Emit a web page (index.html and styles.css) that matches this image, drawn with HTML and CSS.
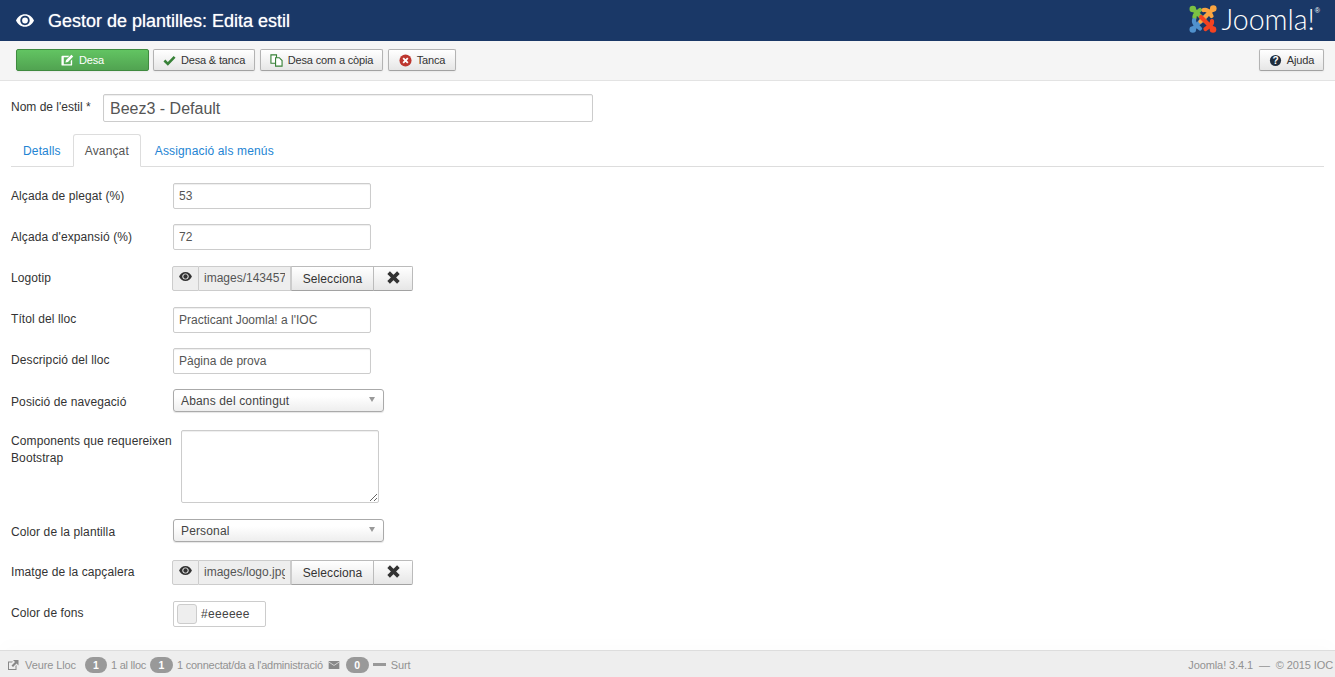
FILE: index.html
```html
<!DOCTYPE html>
<html lang="ca">
<head>
<meta charset="utf-8">
<title>Gestor de plantilles: Edita estil</title>
<link rel="stylesheet" href="styles.css">
</head>
<body>
<header class="topbar">
  <svg class="topbar-eye" viewBox="0 0 20 14"><path fill="#fff" d="M10 0C5.4 0 1.800 3 0 7c1.800 4 5.400 7 10 7s8.200-3 10-7c-1.800-4-5.400-7-10-7zm0 12.200C7 12.200 4.800 9.900 4.800 7S7 1.800 10 1.800 15.200 4.100 15.200 7 13 12.200 10 12.200z"/><circle fill="#fff" cx="10" cy="7" r="3.200"/></svg>
  <h1 class="topbar-title">Gestor de plantilles: Edita estil</h1>
  <div class="brand">
    <svg class="brand-mark" viewBox="0 0 28 28">
      <g fill="none" stroke-width="4.200" stroke-linecap="round">
        <path stroke="#7ac143" d="M5.500 13 Q5 10 8 7.500 L11 5 M4 4 L16 16"/>
        <path stroke="#5091cd" d="M5 15 Q4.500 18 8 21 L11 23.500 M4 24 L17 11"/>
        <path stroke="#f9a541" d="M14.500 5 Q18 4 20.500 7.500 L22.500 11 M24 4 L11.500 16.500"/>
        <path stroke="#f44321" d="M23 16 Q23.500 19 20 21.500 L16.500 24 M24 24 L12 12"/>
      </g>
      <circle fill="#7ac143" cx="3.800" cy="4" r="3.300"/>
      <circle fill="#f9a541" cx="24.300" cy="3.600" r="3.300"/>
      <circle fill="#f44321" cx="24" cy="24.500" r="3.300"/>
      <circle fill="#5091cd" cx="3.800" cy="24.500" r="3.300"/>
    </svg>
    <span class="brand-name">Joomla!</span><span class="brand-reg">®</span>
  </div>
</header>

<nav class="toolbar">
  <button class="btn btn-save" type="button">
    <svg class="ico" viewBox="0 0 14 14"><path fill="#fff" d="M1.500 2H9L7.500 3.500H3v7.500h7.500V7.500L12 6v5.500a1 1 0 0 1-1 1H1.500a1 1 0 0 1-1-1V3a1 1 0 0 1 1-1z"/><path fill="#fff" d="M11.200.8l2 2L7.500 8.500l-2.700.7.700-2.700z"/></svg>
    Desa
  </button>
  <button class="btn btn-close" type="button">
    <svg class="ico" viewBox="0 0 14 14"><path fill="none" stroke="#378137" stroke-width="2.800" d="M1.500 7l3.700 3.700L12.500 3"/></svg>
    Desa &amp; tanca
  </button>
  <button class="btn btn-copy" type="button">
    <svg class="ico" viewBox="0 0 14 14"><path fill="#fff" stroke="#378137" stroke-width="1.200" d="M1 1h6v9H1z"/><path fill="#fff" stroke="#378137" stroke-width="1.200" d="M6 4h4l3 3v6H6z"/></svg>
    Desa com a còpia
  </button>
  <button class="btn btn-cancel" type="button">
    <svg class="ico" viewBox="0 0 14 14"><circle fill="#bd362f" cx="7" cy="7" r="6.500"/><path stroke="#fff" stroke-width="2" d="M4.500 4.500l5 5m0-5l-5 5"/></svg>
    Tanca
  </button>
  <button class="btn btn-help" type="button">
    <svg class="ico" viewBox="0 0 14 14"><circle fill="#1f2d3d" cx="7" cy="7" r="6"/><text x="7" y="10.500" class="ico-q">?</text></svg>
    Ajuda
  </button>
</nav>

<main class="content">
  <div class="name-row">
    <label class="name-label">Nom de l'estil *</label>
    <input class="name-input" type="text" value="Beez3 - Default">
  </div>

  <ul class="tabs">
    <li class="tab">Detalls</li>
    <li class="tab tab-active">Avançat</li>
    <li class="tab">Assignació als menús</li>
  </ul>

  <form class="fields">
    <div class="row row-text row-lead">
      <label class="lbl">Alçada de plegat (%)</label>
      <input class="txt" type="text" value="53">
    </div>
    <div class="row row-text row-lead">
      <label class="lbl">Alçada d'expansió (%)</label>
      <input class="txt" type="text" value="72">
    </div>
    <div class="row row-media">
      <label class="lbl">Logotip</label>
      <div class="media">
        <span class="media-eye"><svg class="eye-s" viewBox="0 0 20 14"><path fill="#333" d="M10 0C5.400 0 1.800 3 0 7c1.800 4 5.400 7 10 7s8.200-3 10-7c-1.800-4-5.400-7-10-7zm0 11.800C7.200 11.800 5 9.700 5 7s2.200-4.800 5-4.800S15 4.300 15 7s-2.200 4.800-5 4.800z"/><circle fill="#333" cx="10" cy="7" r="3.400"/></svg></span>
        <span class="media-path"><span class="media-clip">images/143457</span></span>
        <span class="media-btn">Selecciona</span>
        <span class="media-x"><svg class="x-s" viewBox="0 0 12 12"><path stroke="#333" stroke-width="3.400" d="M1.500 1.500l9 9m0-9l-9 9"/></svg></span>
      </div>
    </div>
    <div class="row row-text">
      <label class="lbl">Títol del lloc</label>
      <input class="txt" type="text" value="Practicant Joomla! a l'IOC">
    </div>
    <div class="row row-text">
      <label class="lbl">Descripció del lloc</label>
      <input class="txt" type="text" value="Pàgina de prova">
    </div>
    <div class="row row-select">
      <label class="lbl">Posició de navegació</label>
      <div class="select">Abans del contingut<span class="caret"></span></div>
    </div>
    <div class="row row-area">
      <label class="lbl lbl-area">Components que requereixen Bootstrap</label>
      <textarea class="area"></textarea>
    </div>
    <div class="row row-select row-before-media">
      <label class="lbl">Color de la plantilla</label>
      <div class="select">Personal<span class="caret"></span></div>
    </div>
    <div class="row row-media">
      <label class="lbl">Imatge de la capçalera</label>
      <div class="media">
        <span class="media-eye"><svg class="eye-s" viewBox="0 0 20 14"><path fill="#333" d="M10 0C5.400 0 1.800 3 0 7c1.800 4 5.400 7 10 7s8.200-3 10-7c-1.800-4-5.400-7-10-7zm0 11.800C7.200 11.800 5 9.700 5 7s2.200-4.800 5-4.800S15 4.300 15 7s-2.200 4.800-5 4.800z"/><circle fill="#333" cx="10" cy="7" r="3.400"/></svg></span>
        <span class="media-path media-path-short"><span class="media-clip">images/logo.jpg</span></span>
        <span class="media-btn">Selecciona</span>
        <span class="media-x"><svg class="x-s" viewBox="0 0 12 12"><path stroke="#333" stroke-width="3.400" d="M1.500 1.500l9 9m0-9l-9 9"/></svg></span>
      </div>
    </div>
    <div class="row row-color">
      <label class="lbl">Color de fons</label>
      <div class="color"><span class="swatch"></span>#eeeeee</div>
    </div>
  </form>
</main>

<footer class="status">
  <svg class="st-ico" viewBox="0 0 12 12"><path fill="#888" d="M1 2.500h5L5 3.500H2v6.500h6.500V7l1-1v5H1z"/><path fill="#888" d="M6 1h5.500v5.500L9.500 4.500 6 8 4.500 6.500 8 3z"/></svg>
  <span class="st-link">Veure Lloc</span>
  <span class="pill">1</span><span class="st-text">1 al lloc</span>
  <span class="pill">1</span><span class="st-text">1 connectat/da a l'administració</span>
  <svg class="st-mail" viewBox="0 0 12 9"><path fill="#888" d="M0 0h12v9H0z"/><path fill="none" stroke="#eee" stroke-width=".8" d="M0 1l6 4 6-4"/></svg>
  <span class="pill pill-zero">0</span>
  <span class="st-minus"></span>
  <span class="st-link">Surt</span>
  <span class="st-right">Joomla! 3.4.1 &nbsp;—&nbsp; © 2015 IOC</span>
</footer>
</body>
</html>
```

FILE: styles.css
```css
* { box-sizing: border-box; }
html, body { height: 100%; }
body {
  margin: 0;
  height: 677px;
  overflow: hidden;
  display: flex;
  flex-direction: column;
  background: #fff;
  color: #333;
  font: 12px/18px "Liberation Sans", Arial, sans-serif;
}

/* header */
.topbar {
  flex: none;
  height: 41px;
  background: #1a3867;
  display: flex;
  align-items: center;
  padding: 0 15px 0 16px;
}
.topbar-eye { width: 18px; height: 13px; margin-right: 14px; }
.topbar-title {
  margin: 0;
  font-size: 18px;
  font-weight: 400;
  color: #fff;
  text-shadow: 0 0 1px rgba(255,255,255,.7);
}
.brand { margin-left: auto; display: flex; align-items: center; color: #fff; height: 41px; }
.brand-mark { width: 28px; height: 28px; margin: -4px 4px 0 0; }
.brand-name { font: 300 28.500px/1 Lato, sans-serif; margin-top: -2px; }
.brand-reg { font-size: 7px; align-self: flex-start; line-height: 1; margin-top: 7px; }

/* toolbar */
.toolbar {
  flex: none;
  height: 40px;
  padding: 8px 11px 9px 16px;
  background: #f5f5f5;
  border-bottom: 1px solid #e3e3e3;
  display: flex;
  gap: 5px;
}
.btn {
  height: 22px;
  padding: 0;
  border: 1px solid #b3b3b3;
  border-bottom-color: #a2a2a2;
  border-radius: 2px;
  background: linear-gradient(#fff, #e6e6e6);
  box-shadow: 0 1px 2px rgba(0,0,0,.05);
  font: 11px/20px "Liberation Sans", Arial, sans-serif;
  letter-spacing: -.15px;
  color: #333;
  display: flex;
  align-items: center;
  justify-content: center;
  gap: 5px;
}
.ico { width: 13px; height: 13px; flex: none; }
.ico-q { font: bold 11px "Liberation Sans", sans-serif; fill: #fff; text-anchor: middle; }
.btn-save {
  width: 133px;
  margin-right: -1px;
  color: #fff;
  background: linear-gradient(#62c462, #51a351);
  border-color: #3f8a3f;
}
.btn-close { width: 102px; }
.btn-copy { width: 123px; }
.btn-cancel { width: 68px; }
.btn-help { width: 65px; margin-left: auto; }

/* content */
.content { flex: 1; padding: 13px 11px 0 11px; min-height: 0; }
.name-row { display: flex; align-items: center; height: 28px; }
.name-label { width: 92px; flex: none; margin-top: -3px; }
.name-input {
  width: 490px;
  height: 28px;
  padding: 2px 6px 0;
  border: 1px solid #ccc;
  border-radius: 2px;
  font: 16px "Liberation Sans", Arial, sans-serif;
  color: #555;
  box-shadow: inset 0 1px 1px rgba(0,0,0,.07);
}

.tabs {
  list-style: none;
  margin: 12px 0 16px;
  padding: 0;
  height: 33px;
  display: flex;
  border-bottom: 1px solid #ddd;
  color: #2384d3;
  letter-spacing: .15px;
}
.tab { padding: 8px 12px 0; height: 33px; }
.tab-active {
  color: #555;
  background: #fff;
  height: 33px;
  border: 1px solid #ddd;
  border-bottom-color: #fff;
  border-radius: 3px 3px 0 0;
  padding: 7px 11px 0;
  width: 68px;
  margin-right: 2px;
}

.fields { display: flex; flex-direction: column; }
.row { display: flex; align-items: flex-start; }
.row-text { height: 26px; margin-bottom: 15px; }
.row-media { height: 26px; margin: 1px 0 15px; }
.row-select { height: 23px; margin-bottom: 18px; }
.row-before-media { margin-bottom: 17px; }
.row-area { height: 73px; margin-bottom: 16px; }
.row-color { height: 26px; }
.lbl { width: 162px; flex: none; padding-top: 3px; color: #333; letter-spacing: .1px; }
.row-lead .lbl, .row-select .lbl { padding-top: 4px; }
.lbl-area { width: 176px; margin-right: -6px; padding-top: 3px; line-height: 17px; }

.txt {
  width: 198px;
  height: 26px;
  padding: 0 5px;
  border: 1px solid #ccc;
  border-radius: 2px;
  font: 12px "Liberation Sans", Arial, sans-serif;
  color: #555;
  box-shadow: inset 0 1px 1px rgba(0,0,0,.07);
}
.media {
  display: flex;
  height: 25px;
  width: 241px;
  margin-left: -1px;
  border-radius: 2px;
  font-size: 12px;
  line-height: 23px;
}
.media-eye {
  width: 27px;
  flex: none;
  border: 1px solid #ccc;
  background: #eee;
  border-radius: 2px 0 0 2px;
  display: flex;
  align-items: center;
  justify-content: center;
}
.eye-s { width: 13px; height: 9px; margin-top: -4px; }
.media-path {
  width: 92px;
  flex: none;
  padding-left: 5px;
  border: 1px solid #ccc;
  border-left: 0;
  background: #eee;
  color: #555;
}
.media-clip {
  display: block;
  width: 81px;
  overflow: hidden;
  white-space: nowrap;
}
.media-btn {
  width: 83px;
  flex: none;
  text-align: center;
  border: 1px solid #bbb;
  border-left-color: #ccc;
  border-bottom-color: #a2a2a2;
  background: linear-gradient(#fff, #e6e6e6);
  line-height: 24px;
  letter-spacing: .1px;
}
.media-x {
  width: 40px;
  flex: none;
  margin-left: -1px;
  border: 1px solid #bbb;
  border-bottom-color: #a2a2a2;
  border-radius: 0 2px 2px 0;
  background: linear-gradient(#fff, #e6e6e6);
  display: flex;
  align-items: center;
  justify-content: center;
}
.x-s { width: 13px; height: 13px; margin-top: -3px; }
.select {
  width: 211px;
  height: 23px;
  padding: 0 7px;
  line-height: 22px;
  border: 1px solid #aaa;
  border-radius: 3px;
  background: linear-gradient(#fff 30%, #eee);
  box-shadow: 0 1px 1px rgba(0,0,0,.1);
  color: #444;
  letter-spacing: .15px;
  position: relative;
}
.caret {
  position: absolute;
  right: 8px;
  top: 7px;
  border: 3.500px solid transparent;
  border-top: 5px solid #999;
  border-bottom: 0;
}
.area {
  width: 198px;
  height: 73px;
  padding: 4px 6px;
  border: 1px solid #ccc;
  border-radius: 2px;
  box-shadow: inset 0 1px 1px rgba(0,0,0,.07);
}
.color {
  width: 93px;
  height: 26px;
  border: 1px solid #ccc;
  border-radius: 2px;
  display: flex;
  align-items: center;
  gap: 4px;
  padding-left: 3px;
  font-size: 12px;
  letter-spacing: .3px;
  color: #444;
}
.swatch {
  width: 20px;
  height: 20px;
  background: #eee;
  border: 1px solid #ccc;
  border-radius: 3px;
}

/* status */
.status {
  flex: none;
  height: 27px;
  padding: 1px 2px 0 7px;
  background: #eee;
  border-top: 1px solid #ddd;
  box-shadow: 0 -8px 16px rgba(0,0,0,.012);
  display: flex;
  align-items: center;
  font-size: 11px;
  color: #929292;
}
.st-ico { width: 12px; height: 12px; margin-right: 6px; }
.st-link { letter-spacing: -.1px; }
.st-text { letter-spacing: -.25px; }
.pill {
  min-width: 22px;
  height: 16px;
  margin: 0 4px 0 9px;
  border-radius: 9px;
  background: #999;
  color: #fff;
  font-weight: 700;
  font-size: 10.500px;
  line-height: 16px;
  text-align: center;
}
.st-text + .pill { margin-left: 4px; min-width: 23px; }
.st-mail { width: 12px; height: 8px; margin: 0 6px 0 5px; }
.pill-zero { margin: 0 4px 0 0; min-width: 23px; }
.st-minus { width: 13px; height: 3px; background: #999; margin-right: 5px; }
.st-right { margin-left: auto; letter-spacing: -.1px; }
```
